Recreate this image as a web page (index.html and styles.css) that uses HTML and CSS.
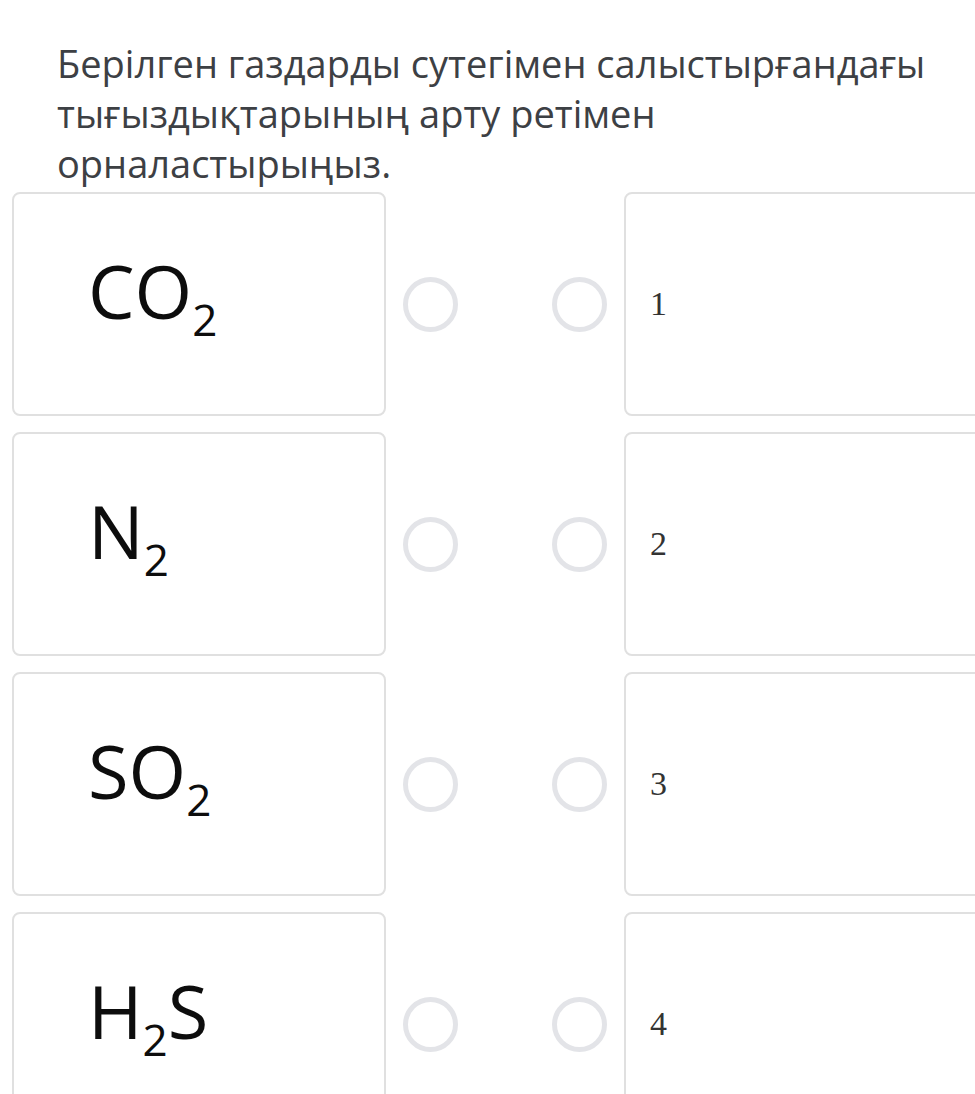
FILE: index.html
```html
<!DOCTYPE html>
<html lang="kk">
<head>
    <meta charset="UTF-8">
    <title>Сәйкестендіру</title>
    <link rel="stylesheet" href="styles.css">
</head>
<body>
    <div class="question">
        <p class="question-text">Берілген газдарды сутегімен салыстырғандағы тығыздықтарының арту ретімен орналастырыңыз.</p>
    </div>

    <div class="match-list">
        <div class="match-row">
            <div class="card card-left"><span class="formula">CO<sub>2</sub></span></div>
            <div class="connectors">
                <span class="dot"></span>
                <span class="dot"></span>
            </div>
            <div class="card card-right"><span class="answer">1</span></div>
        </div>

        <div class="match-row">
            <div class="card card-left"><span class="formula">N<sub>2</sub></span></div>
            <div class="connectors">
                <span class="dot"></span>
                <span class="dot"></span>
            </div>
            <div class="card card-right"><span class="answer">2</span></div>
        </div>

        <div class="match-row">
            <div class="card card-left"><span class="formula">SO<sub>2</sub></span></div>
            <div class="connectors">
                <span class="dot"></span>
                <span class="dot"></span>
            </div>
            <div class="card card-right"><span class="answer">3</span></div>
        </div>

        <div class="match-row">
            <div class="card card-left"><span class="formula">H<sub>2</sub>S</span></div>
            <div class="connectors">
                <span class="dot"></span>
                <span class="dot"></span>
            </div>
            <div class="card card-right"><span class="answer">4</span></div>
        </div>
    </div>
</body>
</html>
```

FILE: styles.css
```css
html,
body {
    overflow: hidden;
}

body {
    font-family: "Open Sans", Arial, sans-serif;
    background-color: #fff;
    margin: 0;
    padding: 0;
}

.question {
    padding: 38px 30px 0 57px;
}

.question-text {
    margin: 0;
    font-size: 38px;
    line-height: 50px;
    color: #3d4044;
}

.match-list {
    display: flex;
    flex-direction: column;
    gap: 16px;
    padding: 4px 0 0 12px;
}

.match-row {
    display: flex;
    height: 224px;
}

.card {
    flex: 0 0 374px;
    box-sizing: border-box;
    border: 2px solid #e0e0e0;
    border-radius: 8px;
    background-color: #fff;
}

.card-left {
    padding: 60px 0 0 74px;
}

.formula {
    display: block;
    font-family: "Open Sans", sans-serif;
    font-size: 74px;
    line-height: 1;
    color: #0d0d0d;
}

.formula sub {
    font-size: 44px;
    line-height: 1;
    vertical-align: -17px;
}

.connectors {
    flex: 0 0 238px;
    box-sizing: border-box;
    display: flex;
    align-items: center;
    justify-content: space-between;
    padding: 0 17px;
}

.dot {
    width: 55px;
    height: 55px;
    box-sizing: border-box;
    border: 5px solid #e3e4e8;
    border-radius: 50%;
}

.card-right {
    display: flex;
    align-items: center;
    padding-left: 24px;
}

.answer {
    font-family: "Liberation Serif", "Times New Roman", serif;
    font-size: 34px;
    color: #333;
}
```
